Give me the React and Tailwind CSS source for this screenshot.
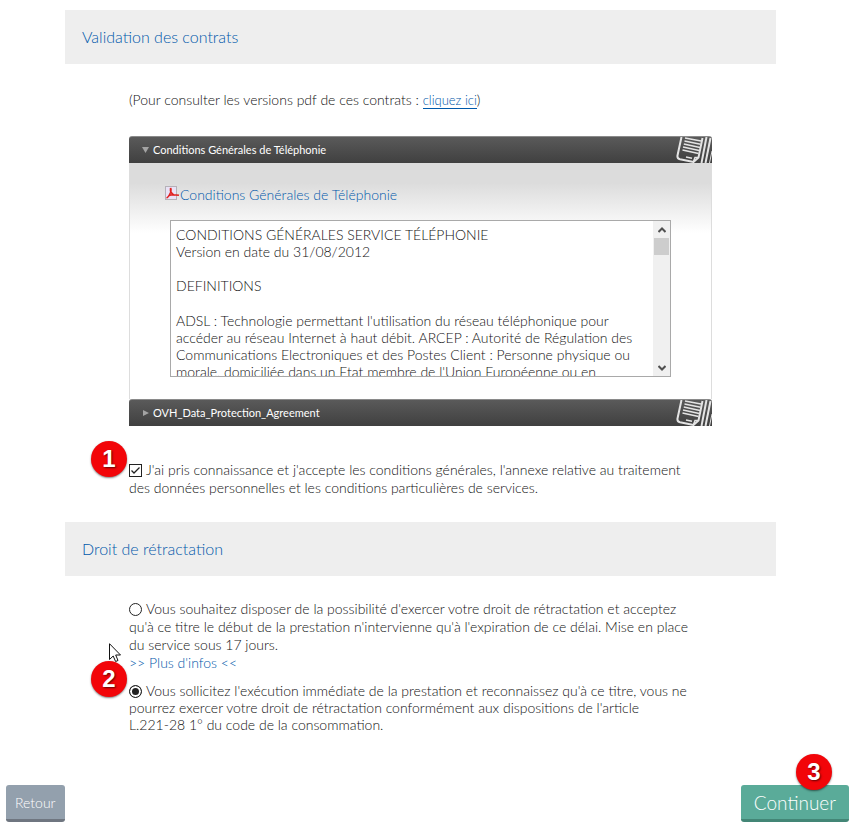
import { useState } from 'react';

const StepBadge = ({ number, className }) => (
  <span
    className={`absolute flex h-9 w-9 items-center justify-center rounded-full bg-[#f20509] font-['Liberation_Sans',sans-serif] text-2xl font-bold text-white shadow-[0_1px_2px_rgba(0,0,0,0.5)] [text-shadow:1px_1px_2px_rgba(0,0,0,0.6)] ${className}`}
  >
    {number}
  </span>
);

const SectionTitle = ({ children }) => (
  <h2 className="bg-[#eeeeee] px-[17px] py-[15px] text-base leading-6 text-[#0058aa]">{children}</h2>
);

const ContractIcon = () => (
  <svg className="h-[26px] w-9" viewBox="0 0 36 26" fill="none" stroke="#e4e4e4" aria-hidden="true">
    <path d="M5.5 0 L1.5 18.5 Q1 21.5 4 22.2 L17.5 25 L22.5 20.5 L26.5 1" strokeWidth="2" />
    <path d="M9 1 L25 4 M8.5 4 L24.5 7.2 M7.8 7 L24 10.4 M7 10 L23.2 13.4 M6.5 13 L22.5 16.4" strokeWidth="1.5" />
    <path d="M10 20 L16 21.3 M17.5 24.5 L19 20.5 L22.5 20.5" strokeWidth="1.5" />
    <path d="M30.5 0 L25.5 26" strokeWidth="2" />
    <path d="M34.5 1 L29.5 26" strokeWidth="2" />
    <path d="M36 14 L33.5 26" strokeWidth="1" />
  </svg>
);

const PdfIcon = () => (
  <svg className="h-[14px] w-[15px] shrink-0" viewBox="0 0 15 14" fill="none" aria-hidden="true">
    <rect x="0.5" y="0.5" width="11" height="13" fill="#e9e2f6" stroke="#b5b1b8" />
    <path
      d="M5.5 2 C6.5 3 6 5 5.5 6.5 C4.5 9 3 11.5 1.5 12 M5.5 2 C5 5 7 8 9.5 9.3 M3.5 9.8 C6 8.3 10 8.5 14 9.3"
      stroke="#e0201f"
      strokeWidth="1.5"
    />
  </svg>
);

const AccordionHeader = ({ title, open, onClick }) => (
  <button
    type="button"
    aria-expanded={open}
    onClick={onClick}
    className="flex h-[27px] w-full items-center overflow-hidden rounded-t-[3px] border-t border-[#8a8a8a] bg-linear-to-b from-[#5a5a5a] to-[#404040] pl-[13px] text-left text-[11px] font-normal text-white"
  >
    <svg className="mr-[3px] h-2 w-2" viewBox="0 0 8 8" fill="#a3a3a3" aria-hidden="true">
      {open ? <path d="M0 1 H7 L3.5 7 Z" /> : <path d="M1 1 L7 4 L1 7 Z" />}
    </svg>
    <span className="flex-1">{title}</span>
    <ContractIcon />
  </button>
);

const ScrollArrow = ({ label, down }) => (
  <button type="button" aria-label={label} className="flex h-[17px] w-full items-center justify-center">
    <svg className="h-[6px] w-2" viewBox="0 0 8 6" fill="none" stroke="#505050" strokeWidth="2" aria-hidden="true">
      <path d={down ? 'M0.5 1 L4 4.5 L7.5 1' : 'M0.5 5 L4 1.5 L7.5 5'} />
    </svg>
  </button>
);

const ContractText = () => (
  <div className="flex h-[157px] border border-[#a9a9a9] bg-white">
    <div className="flex-1 overflow-hidden pt-[5px] pl-[5px] text-sm leading-[17px]">
      <p>CONDITIONS GÉNÉRALES SERVICE TÉLÉPHONIE</p>
      <p>Version en date du 31/08/2012</p>
      <p className="mt-[17px]">DEFINITIONS</p>
      <p className="mt-[18px]">
        ADSL : Technologie permettant l'utilisation du réseau téléphonique pour
        <br />
        accéder au réseau Internet à haut débit. ARCEP : Autorité de Régulation des
        <br />
        Communications Electroniques et des Postes Client : Personne physique ou
        <br />
        morale, domiciliée dans un Etat membre de l'Union Européenne ou en
      </p>
    </div>
    <div className="flex w-[17px] flex-col bg-[#f0f0f0]">
      <ScrollArrow label="Monter" />
      <div className="mx-px h-[17px] bg-[#cdcdcd]" />
      <div className="flex-1" />
      <ScrollArrow label="Descendre" down />
    </div>
  </div>
);

const App = () => {
  const [openContract, setOpenContract] = useState('telephonie');
  const [accepted, setAccepted] = useState(true);
  const [withdrawal, setWithdrawal] = useState('immediate');

  const toggleContract = (name) => setOpenContract(openContract === name ? null : name);

  const radioClass =
    'mr-1 h-[13px] w-[13px] appearance-none rounded-full border border-[#222222] bg-white align-[-2px] checked:bg-[#222222] checked:shadow-[inset_0_0_0_2px_#ffffff]';

  return (
    <main className="bg-white pt-[10px] font-['Lato',sans-serif] text-sm font-light text-[#111111]">
      <div className="pr-[89px] pl-[65px]">
        {/* Contracts */}
        <SectionTitle>Validation des contrats</SectionTitle>

        <div className="px-16">
          <p className="pt-[27px] leading-[18px]">
            (Pour consulter les versions pdf de ces contrats :{' '}
            <a href="#contrats" className="border-b border-[#0058aa] text-[13px] text-[#0058aa]">
              cliquez ici
            </a>
            )
          </p>

          <div className="mt-[27px]">
            <AccordionHeader
              title="Conditions Générales de Téléphonie"
              open={openContract === 'telephonie'}
              onClick={() => toggleContract('telephonie')}
            />
            {openContract === 'telephonie' && (
              <div className="border-x border-[#dddddd] bg-[linear-gradient(to_bottom,#dcdcdc_0,#dcdcdc_20px,#ffffff_70px)] pt-[23px] pr-10 pb-[22px] pl-[35px]">
                <a href="#pdf" className="flex text-sm leading-[18px] text-[#0058aa]">
                  <PdfIcon />
                  Conditions Générales de Téléphonie
                </a>
                <div className="mt-4 ml-[5px]">
                  <ContractText />
                </div>
              </div>
            )}
            <AccordionHeader
              title="OVH_Data_Protection_Agreement"
              open={openContract === 'data'}
              onClick={() => toggleContract('data')}
            />
          </div>

          <div className="relative mt-[35px] leading-[18px]">
            <StepBadge number={1} className="-top-5 -left-[38px]" />
            <input
              id="accept"
              type="checkbox"
              checked={accepted}
              onChange={(e) => setAccepted(e.target.checked)}
              className="peer mr-1 h-[13px] w-[13px] appearance-none border border-[#222222] bg-white align-[-2px]"
            />
            <svg
              className="pointer-events-none absolute top-[3px] left-0 hidden h-[13px] w-[13px] peer-checked:block"
              viewBox="0 0 13 13"
              fill="none"
              stroke="#222222"
              strokeWidth="1.3"
              aria-hidden="true"
            >
              <path d="M2.5 6.5 L5 9 L10.5 3.5" />
            </svg>
            <label htmlFor="accept">
              J'ai pris connaissance et j'accepte les conditions générales, l'annexe relative au traitement
              <br />
              des données personnelles et les conditions particulières de services.
            </label>
          </div>
        </div>

        {/* Right of withdrawal */}
        <div className="mt-[25px]">
          <SectionTitle>Droit de rétractation</SectionTitle>
        </div>

        <div className="px-16">
          <div className="mt-6 leading-[18px]">
            <input
              id="keep-right"
              type="radio"
              name="withdrawal"
              checked={withdrawal === 'keep'}
              onChange={() => setWithdrawal('keep')}
              className={radioClass}
            />
            <label htmlFor="keep-right">
              Vous souhaitez disposer de la possibilité d'exercer votre droit de rétractation et acceptez
              <br />
              qu'à ce titre le début de la prestation n'intervienne qu'à l'expiration de ce délai. Mise en place
              <br />
              du service sous 17 jours.
            </label>
            <br />
            <a href="#infos" className="text-[#0058aa]">
              &gt;&gt; Plus d'infos &lt;&lt;
            </a>
          </div>

          <div className="relative mt-[10px] leading-[17px]">
            <svg
              className="absolute -top-[39px] -left-5 h-5 w-3"
              viewBox="0 0 12 20"
              fill="#ffffff"
              stroke="#111111"
              aria-hidden="true"
            >
              <path d="M0.5 0.7 V16.5 L4.2 13 L6.6 18.5 L9 17.5 L6.7 12 H11.5 Z" />
            </svg>
            <StepBadge number={2} className="-top-[21px] -left-[38px]" />
            <input
              id="immediate"
              type="radio"
              name="withdrawal"
              checked={withdrawal === 'immediate'}
              onChange={() => setWithdrawal('immediate')}
              className={radioClass}
            />
            <label htmlFor="immediate">
              Vous sollicitez l'exécution immédiate de la prestation et reconnaissez qu'à ce titre, vous ne
              <br />
              pourrez exercer votre droit de rétractation conformément aux dispositions de l'article
              <br />
              L.221-28 1° du code de la consommation.
            </label>
          </div>
        </div>
      </div>

      {/* Navigation */}
      <div className="mt-[52px] flex justify-between pr-4 pb-2 pl-[6px]">
        <button
          type="button"
          className="h-[37px] rounded-[3px] border-b-[3px] border-[#6f7680] bg-[#93a0ad] px-[9px] pt-[2px] text-sm text-white"
        >
          Retour
        </button>
        <div className="relative">
          <StepBadge number={3} className="-top-[31px] left-[55px]" />
          <button
            type="button"
            className="h-[37px] rounded-[3px] border-b-[3px] border-[#438676] bg-[#5aab99] px-[13px] pt-[2px] text-[19px] text-white"
          >
            Continuer
          </button>
        </div>
      </div>
    </main>
  );
};

export default App;
